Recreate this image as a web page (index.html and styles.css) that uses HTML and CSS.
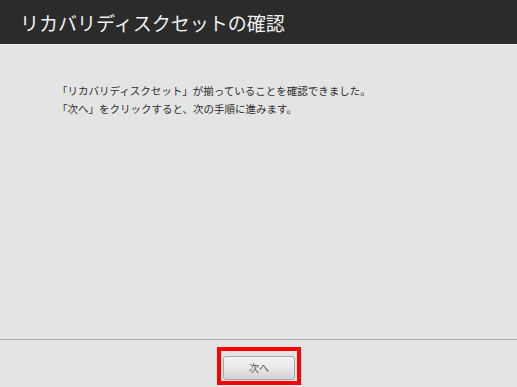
FILE: index.html
```html
<!DOCTYPE html>
<html lang="ja">

<head>
    <meta charset="UTF-8">
    <meta name="viewport" content="width=device-width, initial-scale=1.0">
    <title>リカバリディスクセットの確認</title>
    <link rel="stylesheet" href="styles.css">
</head>

<body>
    <div class="window">
        <div class="header">
            <h1>リカバリディスクセットの確認</h1>
        </div>

        <div class="content">
            <p>「リカバリディスクセット」が揃っていることを確認できました。</p>
            <p>「次へ」をクリックすると、次の手順に進みます。</p>
        </div>

        <div class="footer">
            <div class="highlight">
                <button class="next-btn">次へ</button>
            </div>
        </div>
    </div>
</body>

</html>
```

FILE: styles.css
```css
html, body {
    margin: 0;
    padding: 0;
}

body {
    font-family: "Noto Sans CJK JP", "Liberation Sans", sans-serif;
    background-color: #e4e4e4;
}

.window {
    display: flex;
    flex-direction: column;
    width: 517px;
    height: 387px;
    background-color: #e4e4e4;
}

.header {
    height: 45px;
    box-sizing: border-box;
    background-color: #2b2b2b;
    border-bottom: 1px solid #f2f2f2;
    display: flex;
    align-items: center;
    padding-left: 20px;
}

.header h1 {
    margin: 0;
    font-size: 19px;
    font-weight: normal;
    color: #f0f0f0;
    line-height: 1;
}

.content {
    flex: 1;
    padding: 37px 0 0 57px;
    color: #2e2e2e;
    font-size: 10.5px;
}

.content p {
    margin: 0;
    line-height: 18px;
}

.footer {
    height: 48px;
    box-sizing: border-box;
    border-top: 1px solid #a8a8a8;
    display: flex;
    justify-content: center;
    padding-top: 7px;
    padding-left: 1px;
}

.highlight {
    border: 4px solid #ff0000;
    padding: 2px;
    height: 26px;
}

.next-btn {
    width: 72px;
    height: 24px;
    margin: 0;
    padding: 0;
    font-family: inherit;
    font-size: 10px;
    color: #555;
    background: linear-gradient(to bottom, #f4f4f4 0%, #e8e8e8 50%, #d4d4d4 100%);
    border: 1px solid #a6a6a6;
    border-radius: 3px;
    cursor: pointer;
}
```
